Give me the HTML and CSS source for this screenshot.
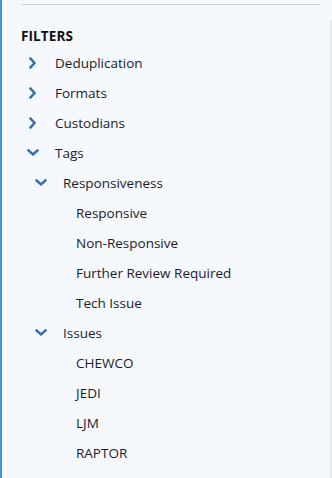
FILE: index.html
```html
<!DOCTYPE html>
<html>
<head>
    <title>Filters</title>
    <link rel="stylesheet" href="styles.css">
</head>
<body>
<div class="sidebar">
  <div class="rule"></div>
  <div class="filters">
    <div class="filters-title">FILTERS</div>
    <ul class="tree">
      <li class="node lvl1">
        <svg class="chev" width="12" height="12" viewBox="0 0 12 12"><path d="M3.5 1.5 L7.5 6 L3.5 10.5"/></svg>
        <span class="label">Deduplication</span>
      </li>
      <li class="node lvl1">
        <svg class="chev" width="12" height="12" viewBox="0 0 12 12"><path d="M3.5 1.5 L7.5 6 L3.5 10.5"/></svg>
        <span class="label">Formats</span>
      </li>
      <li class="node lvl1">
        <svg class="chev" width="12" height="12" viewBox="0 0 12 12"><path d="M3.5 1.5 L7.5 6 L3.5 10.5"/></svg>
        <span class="label">Custodians</span>
      </li>
      <li class="node lvl1">
        <svg class="chev" width="12" height="12" viewBox="0 0 12 12"><path d="M1.5 3.5 L6 7.5 L10.5 3.5"/></svg>
        <span class="label">Tags</span>
      </li>
      <li class="node lvl2">
        <svg class="chev" width="12" height="12" viewBox="0 0 12 12"><path d="M1.5 3.5 L6 7.5 L10.5 3.5"/></svg>
        <span class="label">Responsiveness</span>
      </li>
      <li class="node lvl3"><span class="label">Responsive</span></li>
      <li class="node lvl3"><span class="label">Non-Responsive</span></li>
      <li class="node lvl3"><span class="label">Further Review Required</span></li>
      <li class="node lvl3"><span class="label">Tech Issue</span></li>
      <li class="node lvl2">
        <svg class="chev" width="12" height="12" viewBox="0 0 12 12"><path d="M1.5 3.5 L6 7.5 L10.5 3.5"/></svg>
        <span class="label">Issues</span>
      </li>
      <li class="node lvl3"><span class="label">CHEWCO</span></li>
      <li class="node lvl3"><span class="label">JEDI</span></li>
      <li class="node lvl3"><span class="label">LJM</span></li>
      <li class="node lvl3"><span class="label">RAPTOR</span></li>
    </ul>
  </div>
  <div class="edge"></div>
</div>
</body>
</html>
```
FILE: styles.css
```css
html, body {
  height: 100%;
  margin: 0;
  overflow: hidden;
}
body {
  background: #f5f8fc;
  font-family: "Open Sans", sans-serif;
  color: #1b1b2b;
}
.sidebar {
  position: relative;
  height: 100%;
  border-left: 2px solid #4a90d6;
  box-sizing: border-box;
  padding: 4px 0 0 19px;
}
.rule {
  width: 300px;
  height: 1px;
  background: #cfd3d8;
}
.filters {
  padding-top: 22px;
}
.filters-title {
  font-size: 13.5px;
  font-weight: bold;
  line-height: 18px;
  height: 21px;
  color: #111;
  letter-spacing: 0.1px;
}
.tree {
  list-style: none;
  margin: 0;
  padding: 0;
}
.node {
  display: flex;
  align-items: center;
  height: 30px;
  font-size: 13.5px;
}
.chev {
  flex: none;
  fill: none;
  stroke: #2f6db3;
  stroke-width: 2.4;
  stroke-linecap: square;
  stroke-linejoin: miter;
}
.lvl1 .chev {
  margin-left: 6px;
  margin-right: 16px;
}
.lvl2 .chev {
  margin-left: 14px;
  margin-right: 16px;
}
.lvl3 {
  padding-left: 55px;
}
.edge {
  position: absolute;
  top: 20px;
  bottom: 0;
  right: 0;
  width: 3px;
  border-radius: 3px 0 0 0;
  background: linear-gradient(to right, #eef1f5, #e3e6ea);
}
```
